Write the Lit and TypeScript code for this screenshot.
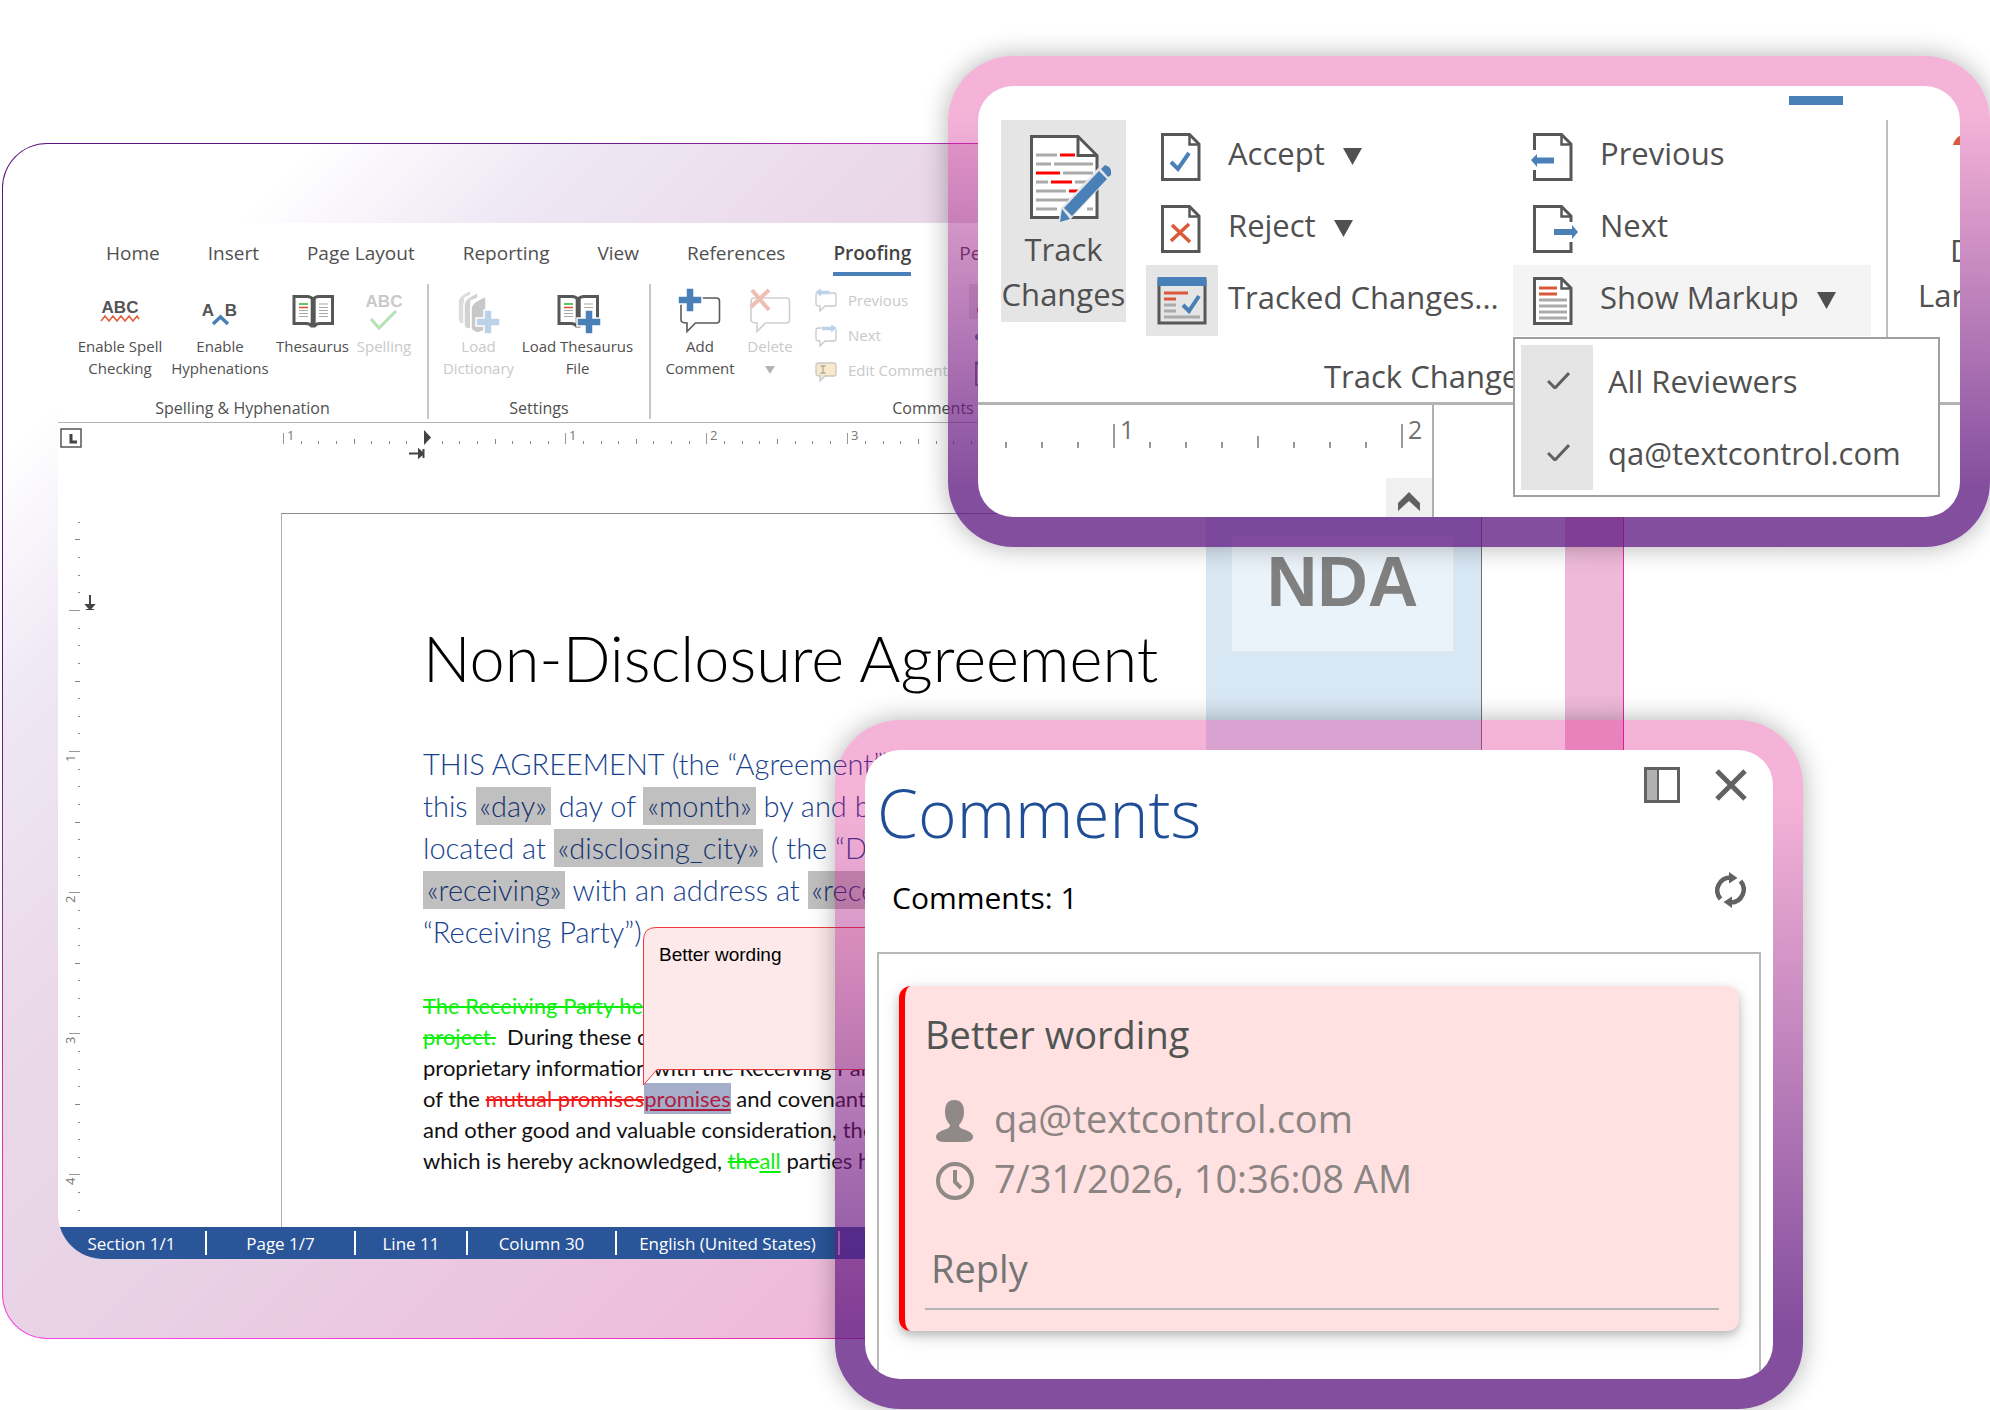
import { LitElement, html, svg, css, nothing } from "lit";
import { customElement, property } from "lit/decorators.js";

const plus = (x: number, y: number, color: string) => svg`
  <path d="M${x - 4} ${y - 12}h8v8h8v8h-8v8h-8v-8h-8v-8h8z" fill="${color}" stroke="#fff" stroke-width="1.5"/>`;

const openBook = svg`
  <path d="M6 12.500h13q4 0 6 3q2-3 6-3h13.500v27h-12.500q-4 0-5.500 2.500h-3q-1.500-2.500-5.500-2.500h-12z" fill="#fff" stroke="#555856" stroke-width="3"/>
  <path d="M25.200 15v27" stroke="#555856" stroke-width="5"/>
  <path d="M11 20h9" stroke="#2fae2f" stroke-width="1.500"/>
  <path d="M11 23.500h9" stroke="#e04a2a" stroke-width="1.500"/>
  <path d="M11 26.500h9M11 29.500h9M11 32.500h9M31 20h9M31 23.500h9M31 26.500h9M31 29.500h9M31 32.500h9" stroke="#aaa" stroke-width="1.200"/>`;

const bubble = (stroke: string) => svg`
  <path d="M9.500 14h32q3 0 3 3v19q0 3-3 3h-21l-8.500 8.500v-8.500q-6 0-6-3v-19q0-3 3.500-3z" fill="#fff" stroke="${stroke}" stroke-width="1.600"/>`;

const pageShape = (extra: unknown) => svg`
  <path d="M1.500 1.500H28.500L38 11V46.500H1.500z" fill="#fff" stroke="#555856" stroke-width="3"/>
  <path d="M28.500 2V11.500H38" fill="none" stroke="#555856" stroke-width="2.500"/>${extra}`;

const icons: Record<string, unknown> = {
  spellCheck: svg`<text x="25" y="29" class="glyph">ABC</text>
    <path d="M6 37l4-5 4 5 4-5 4 5 4-5 4 5 4-5 4 5 4-5 2 3" fill="none" stroke="#e2603f" stroke-width="1.600"/>`,
  hyphen: svg`<text x="13" y="32" class="glyph">A</text><text x="36" y="32" class="glyph">B</text>
    <path d="M18 40l7.500-7 7.500 7" fill="none" stroke="#4a80b8" stroke-width="3.500"/>`,
  book: openBook,
  spelling: svg`<text x="25" y="23" class="glyph pale">ABC</text>
    <path d="M12 35l8 9 17-17" fill="none" stroke="#b5e2b5" stroke-width="3"/>`,
  dictionary: svg`
    <g stroke="#fff" stroke-width="1.500">
    <path d="M4 17q1-5 7-8l6-3v5l-6 3v26h-3q-4-1-4-5z" fill="#dcdcdc"/>
    <path d="M10 20q1-5 7-8l7-4v6l-7 3v28h-3q-4-1-4-5z" fill="#d2d2d2"/>
    <path d="M17 24q1-5 7-8l8-4v34l-8 3q-6-1-7-5z" fill="#c8c8c8"/></g>${plus(34, 38, "#bcd2e8")}`,
  loadBook: svg`${openBook}${plus(36, 38, "#4a80b8")}`,
  addComment: svg`${bubble("#5a5a5a")}${plus(15, 16, "#4a80b8")}`,
  deleteComment: svg`${bubble("#cfcfcf")}<path d="M7 6l17 20M24 6L6 23" fill="none" stroke="#f0bfb3" stroke-width="4"/>`,
};

const miniBubble = (fill: string, extra: unknown) => svg`
  <path d="M4 5h15q2 0 2 2v9q0 2-2 2h-9l-5 5v-5q-4 0-4-2v-9q0-2 3-2z" fill="${fill}" stroke="#c8c8c8" stroke-width="1.300"/>${extra}`;

const miniIcons: Record<string, unknown> = {
  previous: miniBubble("#fff", svg`<path d="M0 4l6-4v2.500h9v4h-9v2.500z" fill="#bcd2e8" stroke="#fff" stroke-width=".5"/>`),
  next: miniBubble("#fff", svg`<path d="M22 5l-6-4v2.500h-9v4h9v2.500z" fill="#bcd2e8" stroke="#fff" stroke-width=".5"/>`),
  edit: miniBubble("#fae8cb", svg`<path d="M5.500 8h5M5.500 15h5M8 8v7" stroke="#aaa" stroke-width="1.300"/>`),
};

const docIcons: Record<string, unknown> = {
  accept: pageShape(svg`<path d="M10 29l7 7 11-16" fill="none" stroke="#4a80b8" stroke-width="4"/>`),
  reject: pageShape(svg`<path d="M11 20l18 17M28 19L10 36" fill="none" stroke="#d9593a" stroke-width="3.500"/>`),
  tracked: svg`<rect x="-2" y="4" width="46" height="42" fill="#e5e5e5" stroke="#555856" stroke-width="3"/>
    <rect x="-3.500" y="0" width="49" height="9" fill="#4a80b8"/>
    <path d="M3 16h24M3 22h12" stroke="#d9593a" stroke-width="3"/>
    <path d="M3 28h12M3 34h12M3 40h36" stroke="#aaa" stroke-width="3"/>
    <path d="M22 28l6 6 10-15" fill="none" stroke="#4a80b8" stroke-width="4"/>`,
  previous: pageShape(svg`<path d="M-3 17h12v20h-12z" fill="#fff"/>
    <path d="M-2 27l6-6v3.500h17v6H4V34z" fill="#4a80b8"/>`),
  next: pageShape(svg`<path d="M31 22l5-5h6v20h-6z" fill="#fff"/>
    <path d="M45 27l-6-7v4H21v6h18v4z" fill="#4a80b8"/>`),
  markup: pageShape(svg`<path d="M6 11h18M6 17h18" stroke="#d9593a" stroke-width="3"/>
    <path d="M6 23h28M6 29h28M6 35h28M6 41h28" stroke="#aaa" stroke-width="3"/>`),
};

@customElement("ribbon-button")
class RibbonButton extends LitElement {
  @property() icon = "";
  @property() top = "";
  @property() bottom = "";
  @property({ type: Boolean }) pale = false;

  static styles = css`
    :host { display: block; }
    .btn {
      width: 100%; padding: 0; border: 0; background: none; color: #505050;
      font: 15px/22px "Open Sans", "Noto Sans", sans-serif;
      display: flex; flex-direction: column; align-items: center; white-space: nowrap;
    }
    .btn.off { color: #c9c9c9; }
    .icon { display: block; width: 50px; height: 51px; overflow: visible; }
    .glyph { font: bold 17px "Liberation Sans", sans-serif; fill: #555; text-anchor: middle; }
    .glyph.pale { fill: #c9c9c9; }
    .arrow { fill: #b5b5b5; display: block; margin-top: 9px; }
  `;

  render() {
    return html`<button class="btn ${this.pale ? "off" : ""}" ?disabled=${this.pale}>
      <svg class="icon" viewBox="0 0 50 51" aria-hidden="true">${icons[this.icon]}</svg>
      <span>${this.top}</span>
      ${this.bottom === "▼"
        ? html`<svg class="arrow" width="10" height="8"><path d="M0 0h10l-5 8z"/></svg>`
        : this.bottom ? html`<span>${this.bottom}</span>` : nothing}
    </button>`;
  }
}

@customElement("editor-window")
class EditorWindow extends LitElement {
  static styles = css`
    :host {
      display: flex; flex-direction: column; background: #fff; color: #505050;
      border-bottom-left-radius: 45px; overflow: hidden;
      font: 16px/22px "Open Sans", "Noto Sans", sans-serif;
    }
    button { font: inherit; color: inherit; background: none; border: 0; padding: 0; }
    .tabs { display: flex; gap: 48px; padding: 17px 0 0 48px; overflow: hidden; }
    .tab { font-size: 19px; line-height: 26px; padding-bottom: 6px; border-bottom: 4px solid transparent; white-space: nowrap; }
    .tab.active { font-weight: 600; color: #444; border-color: #4a80b8; }
    .ribbon { display: flex; margin-top: 8px; padding-bottom: 3px; border-bottom: 1px solid #b4b4b4; }
    .group { display: flex; flex-direction: column; flex: none; border-right: 2px solid #c8c8c8; box-sizing: border-box; }
    .items { display: flex; height: 96px; }
    .caption { text-align: center; margin-top: 17px; }
    .g1 { width: 371px; } .g1 .items { padding-left: 12px; }
    .g2 { width: 222px; } .g2 .items { padding-left: 10px; }
    .g3 { width: 566px; } .g3 .items { padding-left: 9px; }
    .w100 { width: 100px; } .w85 { width: 85px; } .w58 { width: 58px; }
    .w79 { width: 79px; } .w119 { width: 119px; } .w80 { width: 80px; } .w60 { width: 60px; }
    .mini { display: flex; flex-direction: column; gap: 3px; margin-left: 15px; width: 154px; }
    .mini button { display: flex; align-items: center; gap: 11px; font-size: 15px; line-height: 32px; color: #c9c9c9; white-space: nowrap; }
    .mini svg { flex: none; overflow: visible; }
    .side { display: block; }
    .ruler-row { display: flex; align-items: flex-start; height: 90px; }
    .stop { margin: 5px 0 0 2px; flex: none; }
    .hruler { flex: 1; height: 50px; min-width: 0; }
    .hruler text, .vruler text { font: 13px "Open Sans", sans-serif; fill: #777; }
    .body { display: flex; flex: 1; }
    .vruler { width: 50px; flex: none; }
    .page {
      flex: 1; min-width: 0; margin: 0 83px 0 173px; position: relative; overflow: hidden;
      border: 1px solid #8c8c8c; border-left-color: #b0b0b0; border-right-color: #707070; border-bottom: 0;
      padding: 106px 0 50px 141px; box-sizing: border-box;
      font-family: Lato, "Open Sans", sans-serif; white-space: nowrap; color: #000;
    }
    .title { margin: 0; font-size: 63px; line-height: 76px; font-weight: 300; }
    .lead { margin: 47px 0 0; font-size: 29px; line-height: 42px; font-weight: 300; color: #17428f; }
    .field { background: #c0c0c0; color: #16336e; display: inline-block; line-height: 38px; padding: 0 4px; }
    .text { margin: 37px 0 0; font-size: 22px; line-height: 31px; color: #111; }
    .line { display: block; }
    del.a, ins.a { color: #0bef0b; }
    del.b { color: #f01818; }
    .sel { background: #a4aecb; color: #b01c40; display: inline-block; line-height: 31px; }
    .cover { position: absolute; top: 0; right: 0; bottom: 0; width: 275px; background: #d8e7f4; }
    .stamp {
      margin: 21px 27px 0 25px; background: #ebf3fa; border: 1px solid #dfe8ee; box-sizing: border-box; height: 117px;
      font: bold 70px/92px "Liberation Sans", Arial, sans-serif; color: #808080; text-align: center;
    }
    .note { position: absolute; left: 361px; top: 412px; width: 380px; height: 160px; }
    .note svg { position: absolute; inset: 0; }
    .note p { position: relative; margin: 18px 16px; font: 19px/22px "Liberation Sans", Arial, sans-serif; color: #000; }
    .status { display: flex; align-items: center; background: #2a5599; color: #fff; height: 32px; font-size: 17px; }
    .cell { text-align: center; border-right: 2px solid #fff; box-sizing: border-box; height: 24px; line-height: 26px; white-space: nowrap; }
    .s1 { width: 149px; } .s2 { width: 149px; } .s3 { width: 112px; } .s4 { width: 149px; } .s5 { width: 223px; }
  `;

  private horizontalTicks() {
    const marks = [];
    for (let i = 0; i < 84; i++) {
      const x = Math.round(201 + i * 17.64);
      if (i === 8) continue;
      if (i % 8 === 0) {
        marks.push(svg`<path d="M${x}.5 10v11" stroke="#999"/><text x="${x + 4}" y="17">${Math.abs(i / 8 - 1)}</text>`);
      } else {
        marks.push(svg`<path d="M${x}.5 ${i % 4 === 0 ? 16 : 18}v${i % 4 === 0 ? 5 : 3}" stroke="#888"/>`);
      }
    }
    return marks;
  }

  private verticalTicks() {
    const marks = [];
    for (let i = -5; i < 35; i++) {
      const y = Math.round(97 + i * 17.64);
      if (i % 8 === 0) {
        marks.push(svg`<path d="M11 ${y}.5h11" stroke="#999"/>`);
        if (i > 0) marks.push(svg`<text transform="translate(17 ${y + 11}) rotate(-90)">${i / 8}</text>`);
      } else {
        const half = i % 4 === 0;
        marks.push(svg`<path d="M${half ? 17 : 20} ${y}.5h${half ? 5 : 2}" stroke="#888"/>`);
      }
    }
    return marks;
  }

  render() {
    const tabs = ["Home", "Insert", "Page Layout", "Reporting", "View", "References", "Proofing", "Pe"];
    const mini = [["previous", "Previous"], ["next", "Next"], ["edit", "Edit Comment"]];
    const status = ["Section 1/1", "Page 1/7", "Line 11", "Column 30", "English (United States)"];
    return html`
      <nav class="tabs">${tabs.map((t) => html`<button class="tab ${t === "Proofing" ? "active" : ""}">${t}</button>`)}</nav>
      <div class="ribbon">
        <div class="group g1">
          <div class="items">
            <ribbon-button class="w100" icon="spellCheck" top="Enable Spell" bottom="Checking"></ribbon-button>
            <ribbon-button class="w100" icon="hyphen" top="Enable" bottom="Hyphenations"></ribbon-button>
            <ribbon-button class="w85" icon="book" top="Thesaurus"></ribbon-button>
            <ribbon-button class="w58" icon="spelling" top="Spelling" pale></ribbon-button>
          </div>
          <div class="caption">Spelling &amp; Hyphenation</div>
        </div>
        <div class="group g2">
          <div class="items">
            <ribbon-button class="w79" icon="dictionary" top="Load" bottom="Dictionary" pale></ribbon-button>
            <ribbon-button class="w119" icon="loadBook" top="Load Thesaurus" bottom="File"></ribbon-button>
          </div>
          <div class="caption">Settings</div>
        </div>
        <div class="group g3">
          <div class="items">
            <ribbon-button class="w80" icon="addComment" top="Add" bottom="Comment"></ribbon-button>
            <ribbon-button class="w60" icon="deleteComment" top="Delete" bottom="▼" pale></ribbon-button>
            <div class="mini">
              ${mini.map(([icon, label]) => html`<button disabled>
                <svg width="22" height="24" aria-hidden="true">${miniIcons[icon]}</svg>${label}</button>`)}
            </div>
            <svg class="side" width="36" height="104" aria-hidden="true">
              <rect width="36" height="35" fill="#e5e5e5"/>
              <circle cx="12" cy="26" r="4" fill="#e04a2a"/>
              <circle cx="9" cy="53" r="3" fill="#4a80b8"/>
              <path d="M7 80v21h20v-21z" fill="none" stroke="#555" stroke-width="1.500"/>
              <path d="M6 79h22" stroke="#4a80b8" stroke-width="3"/>
            </svg>
          </div>
          <div class="caption">Comments</div>
        </div>
      </div>
      <div class="ruler-row">
        <svg class="stop" width="22" height="20" aria-hidden="true">
          <rect x="1" y="1" width="20" height="18" fill="#fff" stroke="#555" stroke-width="1.500"/>
          <path d="M11 6v8h6" fill="none" stroke="#444" stroke-width="3"/>
        </svg>
        <svg class="hruler" aria-hidden="true">
          ${this.horizontalTicks()}
          <path d="M342 7l7 7.500-7 7.500z" fill="#444"/>
          <path d="M327 30.500h11M337 27l4 3.500-4 3.500zM341.500 26v9" stroke="#444" stroke-width="2" fill="#444"/>
        </svg>
      </div>
      <div class="body">
        <svg class="vruler" height="714" aria-hidden="true">
          ${this.verticalTicks()}
          <path d="M32 82v10M28.500 92h7l-3.500 4z" stroke="#444" stroke-width="2" fill="#444"/>
          <path d="M28 96.500h8" stroke="#444"/>
        </svg>
        <article class="page">
          <h1 class="title">Non-Disclosure Agreement</h1>
          <p class="lead">
            <span class="line">THIS AGREEMENT (the “Agreement”)</span>
            <span class="line">this <span class="field">«day»</span> day of <span class="field">«month»</span> by and b</span>
            <span class="line">located at <span class="field">«disclosing_city»</span> ( the “D</span>
            <span class="line"><span class="field">«receiving»</span> with an address at <span class="field">«rece</span></span>
            <span class="line">“Receiving Party”)</span>
          </p>
          <p class="text">
            <span class="line"><del class="a">The Receiving Party her</del></span>
            <span class="line"><del class="a">project.</del>&nbsp; During these d</span>
            <span class="line">proprietary information with the Receiving Par</span>
            <span class="line">of the <del class="b">mutual promises</del><ins class="sel">promises</ins> and covenants</span>
            <span class="line">and other good and valuable consideration, the</span>
            <span class="line">which is hereby acknowledged, <del class="a">the</del><ins class="a">all</ins> parties h</span>
          </p>
          <aside class="cover"><div class="stamp">NDA</div></aside>
          <div class="note">
            <svg width="380" height="160" aria-hidden="true">
              <path d="M379 1.500H13Q.5 1.500 .5 14V159L14 143.500H379z" fill="#fde9e9" stroke="#f03a3a"/>
            </svg>
            <p>Better wording</p>
          </div>
        </article>
      </div>
      <footer class="status">${status.map((s, i) => html`<span class="cell s${i + 1}">${s}</span>`)}</footer>
    `;
  }
}

@customElement("track-panel")
class TrackPanel extends LitElement {
  static styles = css`
    :host {
      display: block; position: relative; background: #fff; border-radius: 35px; overflow: hidden; color: #505050;
      font: 31px/40px "Open Sans", "Noto Sans", sans-serif; height: 431px;
    }
    button { font: inherit; color: inherit; background: none; border: 0; padding: 0; }
    .mark { width: 54px; height: 9px; margin: 10px 117px 15px auto; background: #4a80b8; }
    .ribbon { display: flex; height: 282px; border-bottom: 3px solid #b4b4b4; }
    .group { width: 894px; flex: none; }
    .items { display: flex; padding-left: 23px; height: 236px; align-items: flex-start; }
    .track { box-sizing: border-box; width: 125px; height: 202px; background: #e5e5e5; line-height: 45px; padding-top: 15px; display: flex; flex-direction: column; align-items: center; }
    .track svg { margin-left: 15px; flex: none; }
    .col { display: flex; flex-direction: column; margin: 1px 0 0 20px; width: 347px; }
    .col.right { width: 358px; }
    .col.right .pic { width: 87px; padding-left: 20px; }
    .col .row { display: flex; height: 71px; margin-bottom: 1px; line-height: 64px; white-space: nowrap; text-align: left; }
    .row .pic { width: 82px; padding-left: 15px; box-sizing: border-box; height: 71px; padding-top: 12px; flex: none; position: relative; }
    .row .pic svg { display: block; overflow: visible; position: relative; }
    .row .on::before { content: ""; position: absolute; left: 0; top: 0; width: 72px; height: 71px; background: #e5e5e5; }
    .row.hover { background: #f4f4f4; }
    .tri { width: 19px; height: 17px; margin: 27px 0 0 18px; fill: #505050; }
    .caption { text-align: center; padding-left: 8px; }
    .rule { width: 2px; height: 260px; background: #bdbdbd; margin-left: 14px; flex: none; }
    .lang { position: relative; margin-left: 30px; line-height: 45px; padding-top: 14px; white-space: nowrap; }
    .lang svg { display: block; margin: 0 0 60px 35px; }
    .lang span { display: block; }
    .lang .first { padding-left: 32px; }
    .view { display: flex; height: 112px; }
    .strip { width: 454px; flex: none; border-right: 2px solid #b0b0b0; display: flex; flex-direction: column; align-items: flex-end; }
    .strip .scale { width: 454px; height: 73px; display: block; }
    .scale text { font: 25px "Open Sans", sans-serif; fill: #707070; }
    .up { width: 46px; flex: 1; background: #f0f0f0; display: flex; justify-content: center; padding-top: 14px; }
    .menu {
      position: absolute; left: 535px; top: 251px; width: 427px; height: 160px; box-sizing: border-box;
      margin: 0; padding: 6px; border: 2px solid #a0a0a0; background: #fff; list-style: none;
    }
    .menu button { display: flex; width: 100%; height: 72px; line-height: 72px; text-align: left; }
    .tick { width: 72px; height: 73px; background: #e5e5e5; margin-right: 15px; padding: 27px 0 0 26px; box-sizing: border-box; flex: none; line-height: 0; }
  `;

  render() {
    const tri = html`<svg class="tri" aria-hidden="true"><path d="M0 0h19l-9.500 17z"/></svg>`;
    const row = (icon: string, label: string, arrow = false, cls = "") => html`
      <button class="row ${cls}"><span class="pic ${icon === "tracked" ? "on" : ""}">
        <svg width="40" height="48" aria-hidden="true">${docIcons[icon]}</svg></span>${label}${arrow ? tri : nothing}</button>`;
    const ticks = [];
    for (let i = 0; i < 12; i++) {
      const x = 28 + i * 36;
      const major = i % 8 === 3;
      const h = major ? 24 : i === 7 ? 12 : 6;
      ticks.push(svg`<path d="M${x} ${43 - h}v${h}" stroke="#999" stroke-width="2"/>`);
      if (major) ticks.push(svg`<text x="${x + 6}" y="34">${i === 3 ? 1 : 2}</text>`);
    }
    return html`
      <div class="mark"></div>
      <div class="ribbon">
        <div class="group">
          <div class="items">
            <button class="track" aria-pressed="true">
              <svg width="82" height="92" viewBox="0 0 82 92" aria-hidden="true">
                <path d="M1.500 1.500H48L67 20.500V82.500H1.500z" fill="#fff" stroke="#555856" stroke-width="3"/>
                <path d="M48 2V20.500H67" fill="none" stroke="#555856" stroke-width="3"/>
                <path d="M6 20h21M6 29h15M24 29h39M33 38h30M6 47h12M45 47h12M6 56h30M6 65h33M6 74h21M57 74h6" stroke="#aaa" stroke-width="3"/>
                <path d="M30 20h15M6 38h24M21 47h21M39 56h9" stroke="#f00" stroke-width="3"/>
                <path d="M28 88l3-15L71 30q6-1 10 3v8L40 85z" fill="#e5e5e5"/>
                <path d="M30 87l2-13 8 10z" fill="#4a80b8"/>
                <path d="M34 73L69 36l8 8L42 81z" fill="#4a80b8"/>
                <path d="M71 34l4-4q6 2 6 6v4l-3 2z" fill="#4a80b8"/>
              </svg>
              <span>Track</span><span>Changes</span>
            </button>
            <div class="col">${row("accept", "Accept", true)}${row("reject", "Reject", true)}${row("tracked", "Tracked Changes...")}</div>
            <div class="col right">${row("previous", "Previous")}${row("next", "Next")}${row("markup", "Show Markup", true, "hover")}</div>
          </div>
          <div class="caption">Track Changes</div>
        </div>
        <div class="rule"></div>
        <div class="lang">
          <svg width="40" height="34" aria-hidden="true"><path d="M0 11Q3 0 16 0V11z" fill="#d9593a"/></svg>
          <span class="first">D</span><span>Lan</span>
        </div>
      </div>
      <div class="view">
        <div class="strip">
          <svg class="scale" aria-hidden="true">${ticks}</svg>
          <button class="up" aria-label="Scroll up">
            <svg width="22" height="19"><path d="M0 11L11 0l11 11v8L11 9 0 19z" fill="#606060"/></svg>
          </button>
        </div>
      </div>
      <ul class="menu">
        ${["All Reviewers", "qa@textcontrol.com"].map((name) => html`<li><button role="menuitemcheckbox" aria-checked="true">
          <span class="tick"><svg width="23" height="17" aria-hidden="true"><path d="M1 9l7 7L22 1" fill="none" stroke="#606060" stroke-width="3"/></svg></span>${name}</button></li>`)}
      </ul>
    `;
  }
}

@customElement("comments-panel")
class CommentsPanel extends LitElement {
  static styles = css`
    :host {
      display: flex; flex-direction: column; background: #fff; border-radius: 35px; overflow: hidden;
      font: 38px/60px "Open Sans", "Noto Sans", sans-serif; height: 629px;
    }
    button { background: none; border: 0; padding: 0; display: block; line-height: 0; }
    .head { display: flex; align-items: flex-start; padding: 17px 26px 0 12px; }
    .name { margin: 0; padding-top: 6px; font-size: 66px; line-height: 79px; font-weight: 300; color: #1f4e96; flex: 1; }
    .close { margin: 2px 0 0 35px; }
    .sub { display: flex; justify-content: space-between; align-items: flex-start; padding: 20px 27px 28px 27px; font-size: 30px; line-height: 52px; color: #000; }
    .list { flex: 1; margin: 0 12px; border: 2px solid #b8b8b8; border-bottom: 0; padding: 32px 20px 0; }
    .card {
      background: #ffe1e1; border-left: 6px solid #f00; border-radius: 12px; padding: 23px 20px 21px;
      box-shadow: 0 4px 8px rgba(0, 0, 0, 0.2), 0 6px 20px rgba(0, 0, 0, 0.12);
    }
    .body { margin: 0 0 29px; line-height: 50px; color: #505553; }
    .meta { display: flex; align-items: center; color: #8a8483; }
    .meta svg { width: 38px; margin: 5px 20px 0 11px; }
    .reply {
      display: block; width: 100%; box-sizing: border-box; height: 71px; margin-top: 31px; padding: 0 0 11px 6px;
      border: 0; border-bottom: 2px solid #b4b4b4; background: none; font: inherit; outline: 0;
    }
    .reply::placeholder { color: #757575; opacity: 1; }
  `;

  render() {
    return html`
      <header class="head">
        <h2 class="name">Comments</h2>
        <button aria-label="Dock panel"><svg width="36" height="36">
          <rect x="1.500" y="1.500" width="33" height="33" fill="#fff" stroke="#5f6261" stroke-width="3"/>
          <rect x="3" y="3" width="10" height="30" fill="#b0b0b0"/><path d="M14 2v32" stroke="#5f6261" stroke-width="2"/></svg></button>
        <button class="close" aria-label="Close"><svg width="32" height="32"><path d="M2 2l28 28M30 2L2 30" stroke="#606361" stroke-width="5"/></svg></button>
      </header>
      <div class="sub">
        <span>Comments: 1</span>
        <button aria-label="Refresh"><svg width="31" height="36" viewBox="0 0 31 36">
          <path d="M5.500 27A13 13 0 0 1 15 5.500M25.500 9A13 13 0 0 1 16 30.500" fill="none" stroke="#606361" stroke-width="4.500"/>
          <path d="M14 0l8.500 6L14 11.500zM17 24.500L8.500 30l8.500 6z" fill="#606361"/></svg></button>
      </div>
      <div class="list">
        <article class="card">
          <p class="body">Better wording</p>
          <div class="meta"><svg height="42" viewBox="0 0 38 42" aria-hidden="true">
            <path d="M18 0q10 0 10 12 0 8-5 13 0 3 4 4 10 3 10 8 0 5-9 5H9Q0 42 0 37q0-5 10-8 4-1 4-4-5-5-5-13Q9 0 18 0z" fill="#8f8988"/></svg>qa@textcontrol.com</div>
          <div class="meta"><svg height="38" viewBox="0 0 38 38" aria-hidden="true">
            <circle cx="19" cy="19" r="17" fill="none" stroke="#8f8988" stroke-width="4"/>
            <path d="M19 8v12l6 6" fill="none" stroke="#8f8988" stroke-width="4"/></svg>7/31/2026, 10:36:08 AM</div>
          <input class="reply" type="text" placeholder="Reply" aria-label="Reply">
        </article>
      </div>
    `;
  }
}

@customElement("app-root")
class AppRoot extends LitElement {
  static styles = css`
    :host { display: block; position: relative; min-height: 100vh; overflow: hidden; background: #fff; box-sizing: border-box; padding: 143px 366px 71px 2px; }
    .backdrop {
      border: 1px solid transparent; border-radius: 45px; padding: 79px 58px 79px 55px;
      background:
        linear-gradient(135deg, #fff 11%, #efe8f5 20%, #ead9e9 32%, #e8d3e5 44%, #efb9d8 72%, #ecb5d8) padding-box,
        linear-gradient(135deg, #5a1482 18%, #a828b0 30%, #f542e0 41%, #f542e0 48%, #e0259f 80%) border-box;
    }
    .backdrop editor-window { min-height: 1036px; }
    .ring {
      position: absolute; padding: 30px; border-radius: 65px;
      background: linear-gradient(rgba(222, 2, 125, 0.3) 12%, rgba(95, 25, 129, 0.77) 88%);
      box-shadow: 0 0 26px rgba(0, 0, 0, 0.3);
    }
    .track { left: 948px; right: 0; top: 56px; }
    .comments { left: 835px; right: 187px; top: 720px; }
  `;

  render() {
    return html`
      <div class="backdrop"><editor-window></editor-window></div>
      <section class="ring track"><track-panel></track-panel></section>
      <section class="ring comments"><comments-panel></comments-panel></section>
    `;
  }
}
